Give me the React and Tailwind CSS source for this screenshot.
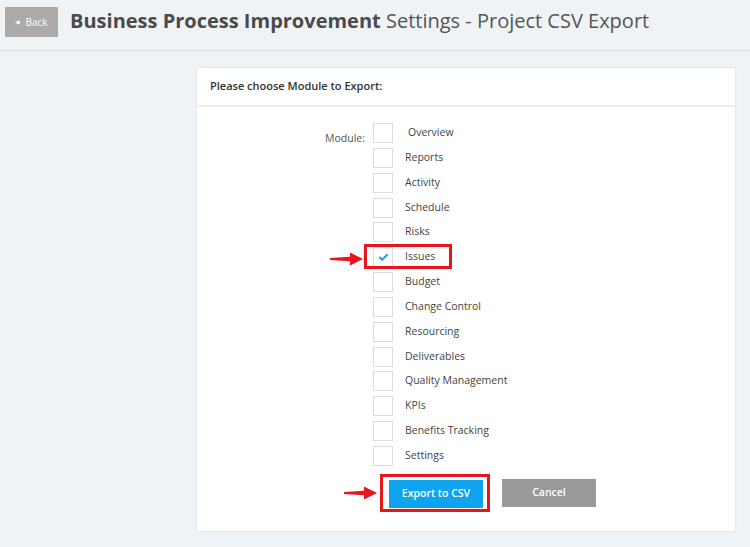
import { Check } from "lucide-react";

const modules = [
    "Overview",
    "Reports",
    "Activity",
    "Schedule",
    "Risks",
    "Issues",
    "Budget",
    "Change Control",
    "Resourcing",
    "Deliverables",
    "Quality Management",
    "KPIs",
    "Benefits Tracking",
    "Settings",
];

const RedArrow = ({ className }) => (
    <svg className={className} width="34" height="14" viewBox="0 0 34 14">
        <path d="M0 6 L20 4.8 L20 0.5 L33 7 L20 13.5 L20 9.2 L0 8 Z" fill="#e8161b" />
    </svg>
);

const App = () => {
    return (
        <div
            className="w-[750px] h-[547px] bg-[#eff3f6] overflow-hidden text-[#444]"
            style={{ fontFamily: '"Open Sans", sans-serif' }}
        >
            {/* Top bar */}
            <div className="h-[51px] border-b border-[#d8dde1] flex items-start pt-[7px] pl-[5px]">
                <div className="w-[53px] h-[30px] bg-[#aaaaaa] flex items-center justify-center gap-[5px] text-white text-[10px]">
                    <span className="text-[6px]">◀</span>
                    <span>Back</span>
                </div>
                <h1 className="ml-[12px] mt-[-1px] text-[20px] leading-[30px] text-[#555]">
                    <span className="font-bold text-[#4a4a4a]">Business Process Improvement</span>{" "}
                    Settings - Project CSV Export
                </h1>
            </div>

            {/* Card */}
            <div className="ml-[197px] mt-[17px] w-[538px] h-[463px] bg-white shadow-[0_0_2px_rgba(0,0,0,0.12)]">
                <div className="h-[39px] border-b-2 border-[#eceeef] flex items-center px-[13px] text-[11px] font-semibold text-[#333]">
                    Please choose Module to Export:
                </div>

                <div className="flex pt-[16px]">
                    <div className="w-[176px] text-right text-[10.5px] text-[#555] pt-[8px] pr-[8px]">
                        Module:
                    </div>
                    <div className="flex flex-col">
                        {modules.map((m, i) => (
                            <div key={m} className="relative h-[24.85px] flex items-start">
                                {m === "Issues" && (
                                    <>
                                        <div className="absolute left-[-9px] top-[-3px] w-[88px] h-[25px] border-[3px] border-[#e8161b]" />
                                        <RedArrow className="absolute left-[-43px] top-[5px]" />
                                    </>
                                )}
                                <div className="w-[20px] h-[20px] border border-[#dcdcdc] bg-white flex items-center justify-center">
                                    {m === "Issues" && (
                                        <Check className="w-[11px] h-[11px] text-[#1b9be3]" strokeWidth={4} />
                                    )}
                                </div>
                                <span
                                    className={`${i === 0 ? "ml-[15px]" : "ml-[12px]"} text-[10.5px] leading-[18px] text-[#444]`}
                                >
                                    {m}
                                </span>
                            </div>
                        ))}
                    </div>
                </div>

                <div className="flex pl-[192px] mt-[8px] gap-[19px]">
                    <div className="relative">
                        <div className="absolute left-[-9px] top-[-5px] w-[110px] h-[38px] border-[3px] border-[#e8161b]" />
                        <RedArrow className="absolute left-[-45px] top-[7px]" />
                        <button className="relative w-[94px] h-[28px] bg-[#0fa3f0] text-white text-[10.5px] font-semibold">
                            Export to CSV
                        </button>
                    </div>
                    <button className="w-[94px] h-[28px] bg-[#999999] text-white text-[10.5px] font-semibold">
                        Cancel
                    </button>
                </div>
            </div>
        </div>
    );
};

export default App;
